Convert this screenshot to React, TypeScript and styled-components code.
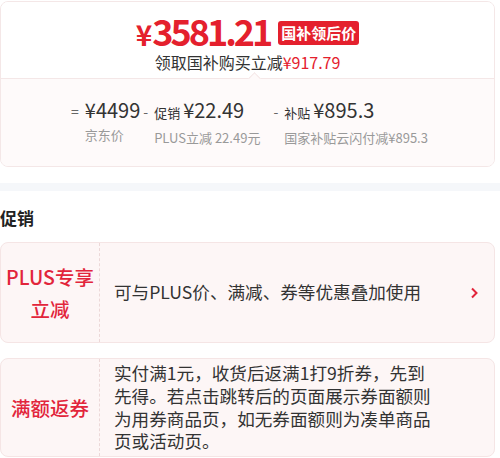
import React from 'react';
import styled, { createGlobalStyle } from 'styled-components';

const GlobalStyle = createGlobalStyle`
body {
    margin: 0;
    background: #fff;
    font-family: "Noto Sans CJK SC", "Noto Sans", sans-serif;
    color: #333;
}
`;

const RED = '#e4202d';
const LABEL_RED = '#e2253b';

const Page = styled.div`
width: 500px;
padding-top: 1px;
`;

const Section = styled.div`
padding-right: 5px;
`;

const PriceCard = styled.div`
border: 1px solid #f4e7e7;
border-radius: 8px;
overflow: hidden;
`;

const PriceTop = styled.div`
position: relative;
background: #fff;
padding: 11px 0 6px;
display: flex;
flex-direction: column;
align-items: center;
border-bottom: 1px solid #f4e7e7;
&::after {
    content: "";
    position: absolute;
    left: 249px;
    bottom: -5px;
    width: 8px;
    height: 8px;
    background: #fefafa;
    border-left: 1px solid #f4e7e7;
    border-top: 1px solid #f4e7e7;
    transform: rotate(45deg);
}
`;

const PriceRow = styled.div`
display: flex;
align-items: center;
height: 39px;
`;

const BigPrice = styled.span`
color: ${RED};
font-weight: 700;
font-size: 36px;
letter-spacing: -3px;
line-height: 39px;
`;

const Yen = styled.span<{ $size: number }>`
font-size: ${props => props.$size}px;
margin-right: 0;
letter-spacing: 0;
`;

const Badge = styled.span`
margin-left: 8px;
background: ${RED};
color: #fff;
font-weight: 700;
font-size: 15px;
line-height: 24px;
padding: 0 3px;
border-radius: 3px;
`;

const SubLine = styled.div`
font-size: 16px;
line-height: 20px;
color: #333;
`;

const Red = styled.span`
color: ${RED};
`;

const Breakdown = styled.div`
background: #fefafa;
display: flex;
padding: 17px 0 19px 70px;
`;

const Term = styled.div<{ $gap: number }>`
display: flex;
margin-right: ${props => props.$gap}px;
`;

const Op = styled.span`
font-size: 14px;
line-height: 30px;
color: #666;
margin-right: 6px;
`;

const TermBody = styled.div`
display: flex;
flex-direction: column;
`;

const TermMain = styled.div`
display: flex;
align-items: baseline;
line-height: 28px;
color: #333;
`;

const TermLabel = styled.span`
font-size: 13px;
margin-right: 3px;
`;

const Amount = styled.span`
font-size: 20px;
`;

const TermNote = styled.div`
margin-top: 2px;
font-size: 13px;
line-height: 18px;
color: #999;
`;

const Band = styled.div`
margin-top: 16px;
height: 8px;
background: #f5f7fa;
`;

const Heading = styled.h2`
margin: 15px 0 12px;
font-size: 17px;
font-weight: 700;
line-height: 24px;
color: #222;
`;

const PromoCard = styled.div<{ $height: number }>`
display: flex;
align-items: stretch;
min-height: ${props => props.$height}px;
box-sizing: border-box;
background: #fdf6f6;
border: 1px solid #f5e5e5;
border-radius: 8px;
& + & {
    margin-top: 15px;
}
`;

const PromoLabel = styled.div`
width: 98px;
flex-shrink: 0;
display: flex;
align-items: center;
justify-content: center;
text-align: center;
border-right: 1px dashed #ecd8d8;
color: ${LABEL_RED};
font-size: 19.5px;
font-weight: 500;
line-height: 32px;
`;

const PromoDesc = styled.div`
flex: 1;
max-width: 324px;
padding-left: 14px;
display: flex;
align-items: center;
font-size: 17.6px;
line-height: 22.7px;
color: #333;
`;

const Arrow = styled.div`
margin-left: auto;
width: 40px;
display: flex;
align-items: center;
justify-content: center;
`;

const Chevron = () => (
    <svg width="8" height="12" viewBox="0 0 8 12">
        <polyline points="2,1.5 6.5,6 2,10.5" fill="none" stroke="#e2253b" strokeWidth="2" />
    </svg>
);

const terms = [
    { op: '=', label: '', amount: '¥4499', note: '京东价', gap: 3 },
    { op: '-', label: '促销', amount: '¥22.49', note: 'PLUS立减 22.49元', gap: 13 },
    { op: '-', label: '补贴', amount: '¥895.3', note: '国家补贴云闪付减¥895.3', gap: 0 },
];

const App: React.FC = () => {
    return (
        <Page>
            <GlobalStyle />
            <Section>
                <PriceCard>
                    <PriceTop>
                        <PriceRow>
                            <BigPrice><Yen $size={28}>¥</Yen>3581.21</BigPrice>
                            <Badge>国补领后价</Badge>
                        </PriceRow>
                        <SubLine>领取国补购买立减<Red>¥917.79</Red></SubLine>
                    </PriceTop>
                    <Breakdown>
                        {terms.map((t, i) => (
                            <Term key={i} $gap={t.gap}>
                                <Op>{t.op}</Op>
                                <TermBody>
                                    <TermMain>
                                        {t.label ? <TermLabel>{t.label}</TermLabel> : <></>}
                                        <Amount>{t.amount}</Amount>
                                    </TermMain>
                                    <TermNote>{t.note}</TermNote>
                                </TermBody>
                            </Term>
                        ))}
                    </Breakdown>
                </PriceCard>
            </Section>
            <Band />
            <Section>
                <Heading>促销</Heading>
                <PromoCard $height={101}>
                    <PromoLabel>PLUS专享<br />立减</PromoLabel>
                    <PromoDesc>可与PLUS价、满减、券等优惠叠加使用</PromoDesc>
                    <Arrow><Chevron /></Arrow>
                </PromoCard>
                <PromoCard $height={99}>
                    <PromoLabel>满额返券</PromoLabel>
                    <PromoDesc>实付满1元，收货后返满1打9折券，先到先得。若点击跳转后的页面展示券面额则为用券商品页，如无券面额则为凑单商品页或活动页。</PromoDesc>
                </PromoCard>
            </Section>
        </Page>
    );
};

export default App;
